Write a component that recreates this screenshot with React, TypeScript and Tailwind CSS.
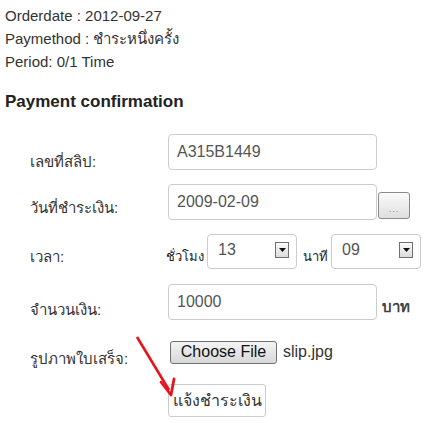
import React from 'react';

const font = { fontFamily: '"Liberation Sans", Arial, "Noto Sans", sans-serif' };

const Label: React.FC<{ children: React.ReactNode; pt: string }> = ({ children, pt }) => (
  <div className={`w-[138px] shrink-0 text-[15px] text-[#333] ${pt}`}>{children}</div>
);

const SelectBox: React.FC<{ value: string }> = ({ value }) => (
  <div className="w-[90px] h-[35px] border border-[#ccc] rounded-[4px] bg-white flex items-start justify-between pl-[10px] pr-[7px] pt-[6px]">
    <span className="text-[16px] leading-[18px] text-[#555]">{value}</span>
    <span className="mt-[1px] w-[14px] h-[16px] border border-[#707070] bg-gradient-to-b from-[#fafafa] to-[#dcdcdc] flex items-center justify-center">
      <svg width="7" height="4" viewBox="0 0 7 4">
        <path d="M0 0h7L3.5 4z" fill="#111" />
      </svg>
    </span>
  </div>
);

export default function App() {
  return (
    <div className="relative w-[430px] h-[423px] bg-white overflow-hidden" style={font}>
      <div className="pl-[5px] pt-[4px] text-[15px] leading-[23px] text-[#333]">
        <div>Orderdate : 2012-09-27</div>
        <div>Paymethod : ชำระหนึ่งครั้ง</div>
        <div>Period: 0/1 Time</div>
      </div>

      <h2 className="pl-[5px] mt-[19px] text-[17px] font-bold text-[#222] leading-[20px]">
        Payment confirmation
      </h2>

      <div className="pl-[30px] mt-[22px] flex flex-col">
        {/* slip no */}
        <div className="flex items-start h-[50px]">
          <Label pt="pt-[17px]">เลขที่สลิป:</Label>
          <div className="w-[209px] h-[36px] border border-[#ccc] rounded-[4px] flex items-center pl-[8px] text-[16px] text-[#555]">
            A315B1449
          </div>
        </div>

        {/* pay date */}
        <div className="flex items-start h-[50px]">
          <Label pt="pt-[13px]">วันที่ชำระเงิน:</Label>
          <div className="w-[209px] h-[36px] border border-[#ccc] rounded-[4px] flex items-center pl-[8px] text-[16px] text-[#555]">
            2009-02-09
          </div>
          <button className="ml-[1px] mt-[8px] w-[32px] h-[27px] border border-[#8a8a8a] rounded-[3px] bg-gradient-to-b from-[#fbfbfb] to-[#dedede] flex items-end justify-center pb-[5px]">
            <span className="text-[9px] leading-[8px] text-[#6a86b0] tracking-[1px]">...</span>
          </button>
        </div>

        {/* time */}
        <div className="flex items-start h-[50px]">
          <Label pt="pt-[12px]">เวลา:</Label>
          <div className="flex items-start">
            <span className="text-[13px] text-[#222] pt-[13px] w-[41px] -ml-[2px] whitespace-nowrap">ชั่วโมง</span>
            <SelectBox value="13" />
            <span className="text-[13px] text-[#222] pt-[13px] ml-[6px] w-[28px] whitespace-nowrap">นาที</span>
            <SelectBox value="09" />
          </div>
        </div>

        {/* amount */}
        <div className="flex items-start h-[56px]">
          <Label pt="pt-[15px]">จำนวนเงิน:</Label>
          <div className="w-[209px] h-[36px] border border-[#ccc] rounded-[4px] flex items-center pl-[8px] text-[16px] text-[#555]">
            10000
          </div>
          <span className="ml-[5px] pt-[12px] text-[15px] font-bold text-[#444]">บาท</span>
        </div>

        {/* slip image */}
        <div className="flex items-start h-[44px]">
          <Label pt="pt-[8px]">รูปภาพใบเสร็จ:</Label>
          <div className="flex items-center ml-[2px]">
            <button className="w-[107px] h-[23px] border border-[#707070] rounded-[3px] bg-gradient-to-b from-[#f4f4f4] to-[#d8d8d8] text-[16px] leading-[20px] text-[#111]">
              Choose File
            </button>
            <span className="ml-[6px] text-[16px] text-[#333]">slip.jpg</span>
          </div>
        </div>

        {/* submit */}
        <div className="flex items-start">
          <div className="w-[138px] shrink-0" />
          <button className="w-[98px] h-[33px] border border-[#ccc] rounded-[3px] bg-white text-[16px] text-[#333] flex items-center justify-center">
            แจ้งชำระเงิน
          </button>
        </div>
      </div>

      {/* annotation arrow */}
      <svg className="absolute left-0 top-0 pointer-events-none" width="430" height="423">
        <line x1="137" y1="337" x2="169" y2="390" stroke="#e8141b" strokeWidth="2.6" />
        <path d="M171 395 L161 382 M171 395 L174 379" stroke="#e8141b" strokeWidth="2.8" fill="none" strokeLinecap="round" />
      </svg>
    </div>
  );
}
